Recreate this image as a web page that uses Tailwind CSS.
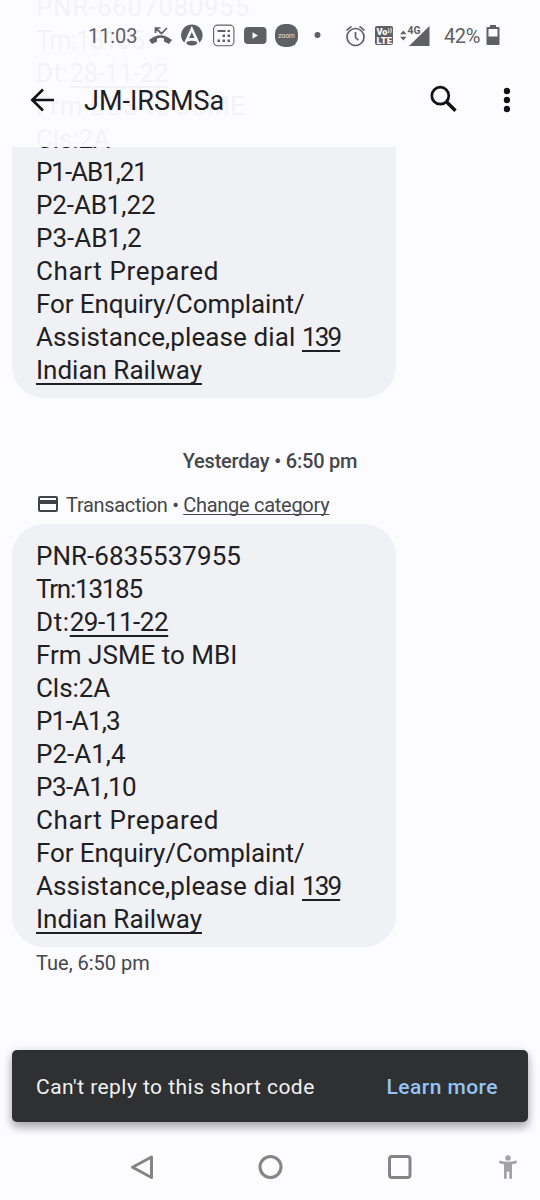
<!DOCTYPE html>
<html lang="en">
<head>
<meta charset="utf-8">
<title>JM-IRSMSa</title>
<script src="https://cdn.jsdelivr.net/npm/@tailwindcss/browser@4"></script>
</head>
<body class="bg-[#fcfcff]">
<div class="relative flex h-[1200px] w-[540px] flex-col overflow-hidden bg-[#fcfcff] font-['Roboto',sans-serif] text-[#1f2023]">

  <!-- Conversation -->
  <main class="flex h-[1134px] flex-none flex-col overflow-hidden">
    <section class="-mt-[25px] ml-3 flex h-[423px] w-[384px] flex-none flex-col whitespace-nowrap rounded-[32px] bg-[#f0f1f5] pt-4 pl-6 text-[26px] leading-[33px]">
      <p class="tracking-[0.69px]">PNR-6607080955</p>
      <p class="tracking-[-1px]">Trn:18185</p>
      <p><span class="tracking-[0.5px]">Dt:</span><span class="tracking-[-0.44px] underline decoration-2 underline-offset-4">28-11-22</span></p>
      <p class="tracking-[0.4px]">Frm BBS to JSME</p>
      <p class="tracking-[-0.1px]">Cls:2A</p>
      <p class="tracking-[-1.05px]">P1-AB1,21</p>
      <p class="tracking-[-0.1px]">P2-AB1,22</p>
      <p class="tracking-[0px]">P3-AB1,2</p>
      <p class="tracking-[0.62px]">Chart Prepared</p>
      <p class="tracking-[-0.08px]">For Enquiry/Complaint/</p>
      <p><span class="tracking-[0.11px]">Assistance,please dial </span><span class="tracking-[-1.9px] underline decoration-2 underline-offset-4 [text-decoration-skip-ink:none]">139</span></p>
      <p><span class="underline decoration-2 underline-offset-4 [text-decoration-skip-ink:none]">Indian Railway</span></p>
    </section>

    <p class="mt-[51px] flex-none self-center text-[20px] leading-6 font-medium tracking-[-0.2px] whitespace-nowrap text-[#44474b]">Yesterday • 6:50 pm</p>

    <div class="mt-5 ml-[38px] flex h-6 flex-none items-center whitespace-nowrap text-[20px] leading-6 text-[#44474b]">
      <svg class="mr-2 mb-0.5 h-4 w-5 flex-none" viewBox="0 0 20 16"><rect x="1" y="1" width="18" height="14" rx="1" fill="none" stroke="#3f4246" stroke-width="2"/><path d="M1 4h18v4H1z" fill="#3f4246"/></svg>
      <span class="tracking-[-0.32px]">Transaction&nbsp;•&nbsp;</span><span class="tracking-[-0.28px] underline decoration-1 underline-offset-2 [text-decoration-skip-ink:none]">Change category</span>
    </div>

    <section class="mt-[7px] ml-3 flex h-[423px] w-[384px] flex-none flex-col whitespace-nowrap rounded-[32px] bg-[#f0f1f5] pt-4 pl-6 text-[26px] leading-[33px]">
      <p class="tracking-[0.05px]">PNR-6835537955</p>
      <p class="tracking-[-1.25px]">Trn:13185</p>
      <p><span class="tracking-[0.6px]">Dt:</span><span class="tracking-[-0.44px] underline decoration-2 underline-offset-4">29-11-22</span></p>
      <p>Frm JSME to MBI</p>
      <p class="tracking-[-0.05px]">Cls:2A</p>
      <p class="tracking-[-0.8px]">P1-A1,3</p>
      <p class="tracking-[0px]">P2-A1,4</p>
      <p class="tracking-[-0.5px]">P3-A1,10</p>
      <p class="tracking-[0.62px]">Chart Prepared</p>
      <p class="tracking-[-0.08px]">For Enquiry/Complaint/</p>
      <p><span class="tracking-[0.11px]">Assistance,please dial </span><span class="tracking-[-1.9px] underline decoration-2 underline-offset-4 [text-decoration-skip-ink:none]">139</span></p>
      <p><span class="underline decoration-2 underline-offset-4 [text-decoration-skip-ink:none]">Indian Railway</span></p>
    </section>

    <p class="mt-1 ml-9 flex-none text-[20px] leading-6 text-[#44474b]">Tue, 6:50 pm</p>

    <div class="mx-3 mt-[75px] flex h-[72px] flex-none items-center justify-between whitespace-nowrap rounded-[5px] bg-[#2f3032] pt-1 pr-[30px] pl-6 text-[21px] shadow-[0_6px_10px_rgba(0,0,0,0.28),0_1px_10px_rgba(0,0,0,0.12)]">
      <span class="tracking-[0.46px] text-[#f1f1f3]">Can't reply to this short code</span>
      <span class="font-medium tracking-[0.45px] text-[#92c5f5]">Learn more</span>
    </div>
  </main>

  <!-- System navigation -->
  <nav class="flex h-[66px] flex-none bg-[#fcfcff]">
    <svg class="h-[66px] w-[540px]" viewBox="0 1134 540 66" fill="none" stroke="#858587" stroke-width="3" stroke-linejoin="round">
      <path d="M151.500 1157v20.500L132.500 1167.200z"/>
      <circle cx="270.500" cy="1167" r="10.500"/>
      <rect x="389.500" y="1156.500" width="20.500" height="21" rx="2.500"/>
      <g fill="#a2a2a4" stroke="none"><circle cx="508" cy="1158" r="2.700"/><path d="M499.500 1160.500q8.500 2.500 17 0l.5 2.500q-2.500.8-5 1.200v14.600h-2.700v-7h-2.600v7h-2.700v-14.600q-2.500-.4-5-1.200z"/></g>
    </svg>
  </nav>

  <!-- Translucent status and app bar -->
  <header class="absolute inset-x-0 top-0 flex h-[147px] flex-col bg-[#fcfcff]/96">
    <div class="flex h-[70px] items-center pt-px pl-[88px] text-[20px] text-[#5f6063]">
      <span class="w-[60px] tracking-[-0.1px]">11:03</span>
      <svg class="h-[30px] w-[152px] flex-none" viewBox="148 20 152 30" fill="#5f6063">
        <path d="M149 39q11.500-9.500 23 0l-3 4-5-2.600v-3q-3.500-1.200-7 0v3l-5 2.600z"/>
        <path d="M155.500 32v-5h5M156 27.500l5.500 5 5.500-5.500" fill="none" stroke="#5f6063" stroke-width="1.700"/>
        <path d="M191.800 23.500a10.700 10.700 0 0 0-7.600 18.200L191.800 25l7.700 16.700a10.700 10.700 0 0 0-7.700-18.200z"/><path d="M191.800 31l2.700 6h-5.400z"/><path d="M186.500 41q5.300-2.500 10.600 0v2q-5.300 3-10.600 0z"/>
        <rect x="213.600" y="24.100" width="20.300" height="20.600" rx="4" fill="none" stroke="#5f6063" stroke-width="1.100"/>
        <path d="M217.500 29h8v2h-8zM227.500 29h2.500v2h-2.500zM227.500 33.500h2.500V36h-2.500zM222.500 33.500h2.500V36h-2.500zM217.500 38.500h2.500V41h-2.500zM222.500 38.500h2.500V41h-2.500zM227.500 38.500h2.500V41h-2.500z"/>
        <rect x="244" y="26" width="22.500" height="17" rx="4"/><path d="M252.500 31.300v6.400l5.500-3.200z" fill="#fbfbfe"/>
        <rect x="275" y="23" width="23" height="23" rx="9.500"/>
        <text x="286.500" y="36.500" font-size="6.500" text-anchor="middle" fill="#e5e5e8" textLength="16.500" lengthAdjust="spacingAndGlyphs">zoom</text>
      </svg>
      <svg class="h-[30px] w-[144px] flex-none" viewBox="300 20 144 30" fill="#5f6063">
        <circle cx="317.500" cy="34" r="3"/>
        <circle cx="355.500" cy="36" r="8.500" fill="none" stroke="#5f6063" stroke-width="1.700"/>
        <path d="M355.500 31v5.500l2.800 2.600M346.500 29.300l5-4M364.500 29.300l-5-4" fill="none" stroke="#5f6063" stroke-width="1.700"/>
        <rect x="375" y="25" width="18" height="19" rx="2"/>
        <text x="376.500" y="33.700" font-size="9" font-weight="900" fill="#fcfcff" textLength="11" lengthAdjust="spacingAndGlyphs">Vo</text>
        <path d="M388.500 27.500q1 2 0 4.500M390.700 26.800q1.200 2.500 0 5.500" fill="none" stroke="#fcfcff" stroke-width="1"/>
        <text x="376.500" y="42.500" font-size="9.500" font-weight="900" fill="#fcfcff" textLength="15.500" lengthAdjust="spacingAndGlyphs">LTE</text>
        <path d="M403.300 29.500l3.200 3.700h-6.400zM403.300 39.500l-3.200-3.700h6.400z"/>
        <text x="407.500" y="32.500" font-size="10" font-weight="700" textLength="13" lengthAdjust="spacingAndGlyphs">4G</text>
        <path d="M429.500 25v20H409z"/>
      </svg>
      <span class="w-[42px] tracking-[-0.4px]">42%</span>
      <svg class="mb-0.5 h-[22px] w-[14px] flex-none" viewBox="0 0 14 22" fill="#5f6063"><path d="M4 1h6v2.200H4z"/><path fill-rule="evenodd" d="M1.500 3h11q1 0 1 1v16q0 1-1 1h-11q-1 0-1-1V4q0-1 1-1zM2.500 5v7.500h9V5z"/></svg>
    </div>
    <div class="flex h-[60px] items-center pl-[30px]">
      <svg class="mb-px h-6 w-6 flex-none" viewBox="0 0 24 24" fill="none" stroke="#111214" stroke-width="2.600"><path d="M24 12H2.500M13 1.500L2.300 12 13 22.500"/></svg>
      <h1 class="mt-0.5 ml-[30px] w-[346px] text-[27px] leading-8 whitespace-nowrap">JM-IRSMSa</h1>
      <svg class="mb-[3px] h-[27px] w-[27px] flex-none" viewBox="430 85 27 27" fill="none" stroke="#111214"><circle cx="440.300" cy="95.700" r="8.500" stroke-width="2.700"/><path d="M446.200 101.500l9.300 9.300" stroke-width="3.400"/></svg>
      <svg class="mb-px ml-[46px] h-[26px] w-2 flex-none" viewBox="0 0 8 26" fill="#111214"><circle cx="4" cy="4" r="3.200"/><circle cx="4" cy="13" r="3.200"/><circle cx="4" cy="22" r="3.200"/></svg>
    </div>
  </header>
</div>
</body>
</html>
